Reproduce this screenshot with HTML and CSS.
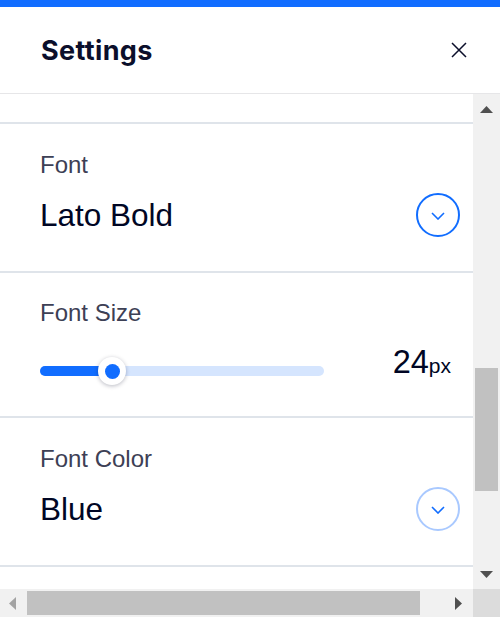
FILE: index.html
```html
<!DOCTYPE html>
<html lang="en">
<head>
<meta charset="utf-8">
<title>Settings</title>
<link rel="stylesheet" href="styles.css">
</head>
<body>
<div class="topbar"></div>
<header class="header">
  <h1 class="title">Settings</h1>
  <button class="close" aria-label="Close">
    <svg width="16" height="16" viewBox="0 0 16 16"><path d="M1 1 L15 15 M15 1 L1 15" stroke="#0b0f2b" stroke-width="1.5" fill="none"/></svg>
  </button>
</header>
<div class="viewport">
  <div class="content">
    <div class="tail"></div>
    <section class="field field-tall">
      <div class="label">Font</div>
      <div class="row">
        <div class="value">Lato Bold</div>
        <span class="dropdown">
          <svg width="14" height="8" viewBox="0 0 14 8"><path d="M1 1 L7 7 L13 1" stroke="#116dff" stroke-width="1.6" fill="none"/></svg>
        </span>
      </div>
    </section>
    <section class="field field-size">
      <div class="label">Font Size</div>
      <div class="row row-slider">
        <div class="slider">
          <div class="track"><div class="fill"></div></div>
          <div class="thumb"><span class="dot"></span></div>
        </div>
        <div class="value value-size">24<span class="unit">px</span></div>
      </div>
    </section>
    <section class="field field-tall">
      <div class="label">Font Color</div>
      <div class="row">
        <div class="value">Blue</div>
        <span class="dropdown dropdown-light">
          <svg width="14" height="8" viewBox="0 0 14 8"><path d="M1 1 L7 7 L13 1" stroke="#116dff" stroke-width="1.6" fill="none"/></svg>
        </span>
      </div>
    </section>
    <div class="field-end"></div>
  </div>
  <div class="vscroll">
    <div class="sb-btn sb-btn-v">
      <svg width="13" height="7" viewBox="0 0 13 7"><path d="M6.5 0 L13 7 L0 7 Z" fill="#505050"/></svg>
    </div>
    <div class="vtrack"><div class="vthumb"></div></div>
    <div class="sb-btn sb-btn-v">
      <svg width="13" height="7" viewBox="0 0 13 7"><path d="M0 0 L13 0 L6.5 7 Z" fill="#505050"/></svg>
    </div>
  </div>
  <div class="hscroll">
    <div class="sb-btn sb-btn-h">
      <svg width="7" height="13" viewBox="0 0 7 13"><path d="M7 0 L7 13 L0 6.5 Z" fill="#a3a3a3"/></svg>
    </div>
    <div class="htrack"><div class="hthumb"></div></div>
    <div class="sb-btn sb-btn-h">
      <svg width="7" height="13" viewBox="0 0 7 13"><path d="M0 0 L7 6.5 L0 13 Z" fill="#505050"/></svg>
    </div>
  </div>
  <div class="corner"></div>
</div>
</body>
</html>
```
FILE: styles.css
```css
html, body {
  margin: 0;
  padding: 0;
}
body {
  width: 500px;
  height: 617px;
  overflow: hidden;
  background: #ffffff;
  font-family: "Liberation Sans", Arial, sans-serif;
  color: #000624;
}
.topbar {
  height: 7px;
  background: #116dff;
}
.header {
  height: 86px;
  border-bottom: 1px solid #e6e6e8;
  display: flex;
  align-items: center;
  justify-content: space-between;
  padding: 0 33px 0 41px;
}
.title {
  margin: 0;
  font-family: "Inter", "Noto Sans", sans-serif;
  font-weight: 700;
  font-size: 27px;
  line-height: 32px;
  color: #0b0f2b;
  letter-spacing: 0.35px;
  padding-top: 2px;
}
.close {
  border: 0;
  padding: 0;
  background: none;
  width: 16px;
  height: 16px;
  display: flex;
}
.viewport {
  display: grid;
  grid-template-columns: 473px 27px;
  grid-template-rows: 495px 28px;
}
.content {
  overflow: hidden;
  display: flex;
  flex-direction: column;
}
.tail {
  height: 28px;
  flex: none;
}
.field {
  flex: none;
  box-sizing: border-box;
  border-top: 2px solid #dfe4ea;
  padding: 27px 13px 0 40px;
}
.field-tall {
  height: 149px;
}
.field-size {
  height: 145px;
  padding-top: 26px;
}
.field-end {
  flex: none;
  border-top: 2px solid #dfe4ea;
}
.label {
  font-size: 24px;
  line-height: 28px;
  color: #3d4055;
}
.row {
  margin-top: 14px;
  height: 44px;
  display: flex;
  align-items: center;
  justify-content: space-between;
}
.value {
  font-size: 31.5px;
  line-height: 36px;
  color: #000624;
}
.dropdown {
  box-sizing: border-box;
  width: 44px;
  height: 44px;
  border: 2.2px solid #116dff;
  border-radius: 50%;
  display: flex;
  align-items: center;
  justify-content: center;
  padding-top: 1px;
}
.dropdown-light {
  border-color: #a9c9ff;
}
.row-slider {
  margin-top: 18px;
  align-items: flex-start;
}
.slider {
  width: 284px;
  height: 28px;
  margin-top: 12px;
  display: flex;
  align-items: center;
}
.track {
  flex: none;
  width: 284px;
  height: 10px;
  border-radius: 5px;
  background: #d5e5fe;
  display: flex;
}
.fill {
  width: 73px;
  height: 10px;
  border-radius: 5px 0 0 5px;
  background: #116dff;
}
.thumb {
  flex: none;
  box-sizing: border-box;
  width: 28px;
  height: 28px;
  border-radius: 50%;
  background: #ffffff;
  box-shadow: 0 1px 4px rgba(0, 6, 36, 0.28);
  margin-left: -226px;
  display: flex;
  align-items: center;
  justify-content: center;
  position: relative;
}
.dot {
  width: 15px;
  height: 15px;
  border-radius: 50%;
  background: #116dff;
}
.value-size {
  font-size: 32.5px;
  margin-right: 9px;
  margin-top: -1px;
}
.unit {
  font-size: 21px;
}
.vscroll {
  background: #f1f1f1;
  display: flex;
  flex-direction: column;
}
.sb-btn {
  flex: none;
  display: flex;
  align-items: center;
  justify-content: center;
}
.sb-btn-v {
  height: 30px;
}
.sb-btn-h {
  width: 27px;
  padding-right: 2px;
  box-sizing: border-box;
}
.vtrack {
  flex: 1;
  padding-top: 244px;
}
.vthumb {
  height: 123px;
  margin: 0 2px;
  background: #c1c1c1;
}
.hscroll {
  background: #f1f1f1;
  display: flex;
}
.htrack {
  flex: 1;
  padding: 2px 0;
}
.hthumb {
  width: 393px;
  height: 24px;
  background: #c1c1c1;
}
.corner {
  background: #dcdcdc;
}
```
